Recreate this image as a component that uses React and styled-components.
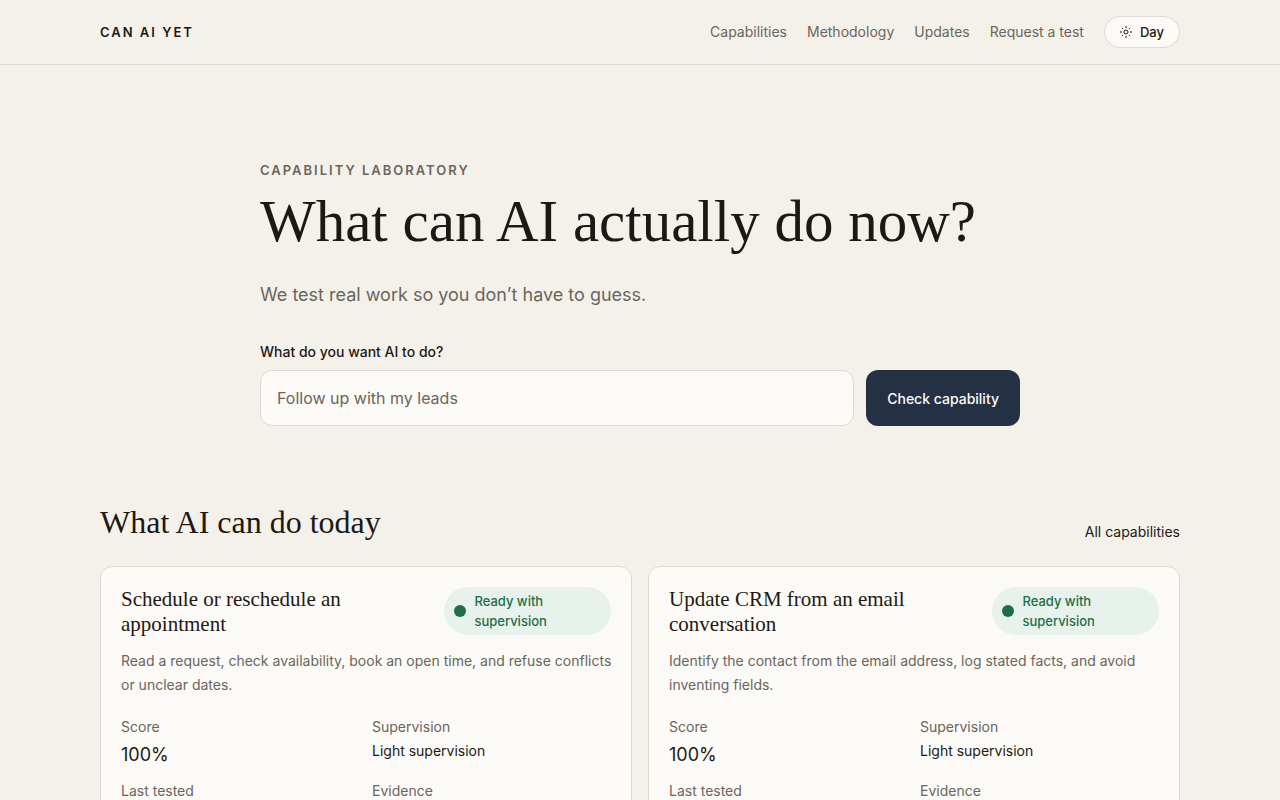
import { useState } from "react";
import styled, { createGlobalStyle, ThemeProvider } from "styled-components";

const theme = {
	color: {
		page: "#f4f1ea",
		card: "#fcfaf6",
		line: "#dedad3",
		ink: "#1c1914",
		muted: "#6b655c",
		navy: "#243044",
		green: "#1d6f47",
		mint: "#e7f2ec",
	},
	font: {
		sans: `Inter, "Liberation Sans", sans-serif`,
		serif: `"Liberation Serif", serif`,
	},
};

const navItems = ["Capabilities", "Methodology", "Updates", "Request a test"];

const capabilities = [
	{
		title: "Schedule or reschedule an appointment",
		status: "Ready with supervision",
		text: "Read a request, check availability, book an open time, and refuse conflicts or unclear dates.",
		score: "100%",
		supervision: "Light supervision",
	},
	{
		title: "Update CRM from an email conversation",
		status: "Ready with supervision",
		text: "Identify the contact from the email address, log stated facts, and avoid inventing fields.",
		score: "100%",
		supervision: "Light supervision",
	},
];

const SunIcon = () => (
	<svg
		width="12"
		height="12"
		viewBox="0 0 12 12"
		fill="none"
		stroke="currentColor"
		aria-hidden="true"
	>
		<circle cx="6" cy="6" r="2" />
		<path d="M6 0v2M6 10v2M0 6h2M10 6h2M1.9 1.9l1.2 1.2M8.9 8.9l1.2 1.2M1.9 10.1l1.2-1.2M8.9 3.1l1.2-1.2" />
	</svg>
);

const CapabilityCard = ({ title, status, text, score, supervision }) => (
	<Card>
		<CardHead>
			<CardTitle>{title}</CardTitle>
			<Badge>
				<Dot />
				<span>{status}</span>
			</Badge>
		</CardHead>
		<CardText>{text}</CardText>
		<Facts>
			<div>
				<dt>Score</dt>
				<Value $large>{score}</Value>
			</div>
			<div>
				<dt>Supervision</dt>
				<Value>{supervision}</Value>
			</div>
			<div>
				<dt>Last tested</dt>
			</div>
			<div>
				<dt>Evidence</dt>
			</div>
		</Facts>
	</Card>
);

const App = () => {
	const [query, setQuery] = useState("");

	return (
		<ThemeProvider theme={theme}>
			<GlobalStyle />
			<Header>
				<HeaderInner>
					<Logo href="#">CAN AI YET</Logo>
					<Nav>
						{navItems.map((item) => (
							<NavLink key={item} href="#">
								{item}
							</NavLink>
						))}
						<ThemeButton type="button">
							<SunIcon />
							Day
						</ThemeButton>
					</Nav>
				</HeaderInner>
			</Header>
			<main>
				<Hero>
					<Eyebrow>CAPABILITY LABORATORY</Eyebrow>
					<HeroTitle>What can AI actually do now?</HeroTitle>
					<Lead>We test real work so you don’t have to guess.</Lead>
					<form onSubmit={(e) => e.preventDefault()}>
						<Label htmlFor="query">What do you want AI to do?</Label>
						<SearchRow>
							<SearchInput
								id="query"
								type="text"
								placeholder="Follow up with my leads"
								value={query}
								onChange={(e) => setQuery(e.target.value)}
							/>
							<SubmitButton type="submit">Check capability</SubmitButton>
						</SearchRow>
					</form>
				</Hero>
				<Section>
					<SectionHead>
						<SectionTitle>What AI can do today</SectionTitle>
						<MoreLink href="#">All capabilities</MoreLink>
					</SectionHead>
					<CardGrid>
						{capabilities.map((item) => (
							<CapabilityCard key={item.title} {...item} />
						))}
					</CardGrid>
				</Section>
			</main>
		</ThemeProvider>
	);
};

const GlobalStyle = createGlobalStyle`
	*, *::before, *::after {
		box-sizing: border-box;
	}

	body {
		margin: 0;
		background: ${theme.color.page};
		color: ${theme.color.ink};
		font-family: ${theme.font.sans};
		font-size: 14px;
		line-height: 20px;
	}

	h1, h2, h3, p, dl, dd {
		margin: 0;
	}

	a {
		color: inherit;
		text-decoration: none;
	}

	button, input {
		font-family: inherit;
	}
`;

const Header = styled.header`
	border-bottom: 1px solid ${(props) => props.theme.color.line};
`;

const HeaderInner = styled.div`
	max-width: 1120px;
	min-height: 64px;
	margin: 0 auto;
	padding: 0 20px;
	display: flex;
	align-items: center;
	justify-content: space-between;
`;

const Logo = styled.a`
	font-size: 13px;
	font-weight: 600;
	letter-spacing: 2px;
`;

const Nav = styled.nav`
	display: flex;
	align-items: center;
	gap: 20px;
`;

const NavLink = styled.a`
	color: ${(props) => props.theme.color.muted};
`;

const ThemeButton = styled.button`
	height: 32px;
	padding: 0 15px;
	display: flex;
	align-items: center;
	gap: 8px;
	border: 1px solid ${(props) => props.theme.color.line};
	border-radius: 16px;
	background: ${(props) => props.theme.color.card};
	color: ${(props) => props.theme.color.ink};
	font-size: 13px;
	font-weight: 500;
`;

const Hero = styled.section`
	max-width: 800px;
	margin: 0 auto;
	padding: 96px 20px 76px;
`;

const Eyebrow = styled.p`
	color: ${(props) => props.theme.color.muted};
	font-size: 13px;
	font-weight: 600;
	line-height: 18px;
	letter-spacing: 2px;
`;

const HeroTitle = styled.h1`
	margin-top: 8px;
	font-family: ${(props) => props.theme.font.serif};
	font-size: 59px;
	font-weight: 400;
	line-height: 68px;
`;

const Lead = styled.p`
	margin-top: 24px;
	color: ${(props) => props.theme.color.muted};
	font-size: 18px;
	line-height: 31px;
`;

const Label = styled.label`
	display: block;
	margin: 32px 0 8px;
	font-weight: 500;
`;

const SearchRow = styled.div`
	display: flex;
	gap: 12px;
`;

const SearchInput = styled.input`
	flex: 1;
	min-width: 0;
	height: 56px;
	padding: 0 16px;
	border: 1px solid ${(props) => props.theme.color.line};
	border-radius: 12px;
	background: ${(props) => props.theme.color.card};
	color: ${(props) => props.theme.color.ink};
	font-size: 16px;

	&::placeholder {
		color: ${(props) => props.theme.color.muted};
		opacity: 1;
	}
`;

const SubmitButton = styled.button`
	padding: 0 21px;
	border: 0;
	border-radius: 12px;
	background: ${(props) => props.theme.color.navy};
	color: ${(props) => props.theme.color.card};
	font-size: 14px;
	font-weight: 500;
`;

const Section = styled.section`
	max-width: 1120px;
	margin: 0 auto;
	padding: 0 20px 64px;
`;

const SectionHead = styled.div`
	display: flex;
	align-items: flex-end;
	justify-content: space-between;
	margin-bottom: 24px;
`;

const SectionTitle = styled.h2`
	font-family: ${(props) => props.theme.font.serif};
	font-size: 32px;
	font-weight: 400;
	line-height: 40px;
`;

const MoreLink = styled.a`
	font-size: 14px;
`;

const CardGrid = styled.div`
	display: grid;
	grid-template-columns: 1fr 1fr;
	gap: 16px;
`;

const Card = styled.article`
	padding: 20px;
	border: 1px solid ${(props) => props.theme.color.line};
	border-radius: 12px;
	background: ${(props) => props.theme.color.card};
`;

const CardHead = styled.div`
	display: flex;
	align-items: flex-start;
	justify-content: space-between;
	gap: 12px;
`;

const CardTitle = styled.h3`
	flex: 1;
	font-family: ${(props) => props.theme.font.serif};
	font-size: 21px;
	font-weight: 400;
	line-height: 25px;
`;

const Badge = styled.div`
	flex: none;
	width: 34%;
	display: flex;
	align-items: center;
	gap: 8px;
	padding: 4px 10px;
	border-radius: 24px;
	background: ${(props) => props.theme.color.mint};
	color: ${(props) => props.theme.color.green};
	font-size: 13px;
	font-weight: 500;
`;

const Dot = styled.span`
	flex: none;
	width: 12px;
	height: 12px;
	border-radius: 50%;
	background: ${(props) => props.theme.color.green};
`;

// runs slightly into the card padding on the right
const CardText = styled.p`
	margin: 12px -8px 0 0;
	color: ${(props) => props.theme.color.muted};
	line-height: 24px;
`;

const Facts = styled.dl`
	display: grid;
	grid-template-columns: 1fr 1fr;
	gap: 12px;
	margin-top: 20px;

	dt {
		color: ${(props) => props.theme.color.muted};
	}
`;

const Value = styled.dd`
	&& {
		margin-top: 4px;
	}
	font-size: ${(props) => (props.$large ? "18px" : "14px")};
	line-height: ${(props) => (props.$large ? "28px" : "20px")};
`;

export default App;
